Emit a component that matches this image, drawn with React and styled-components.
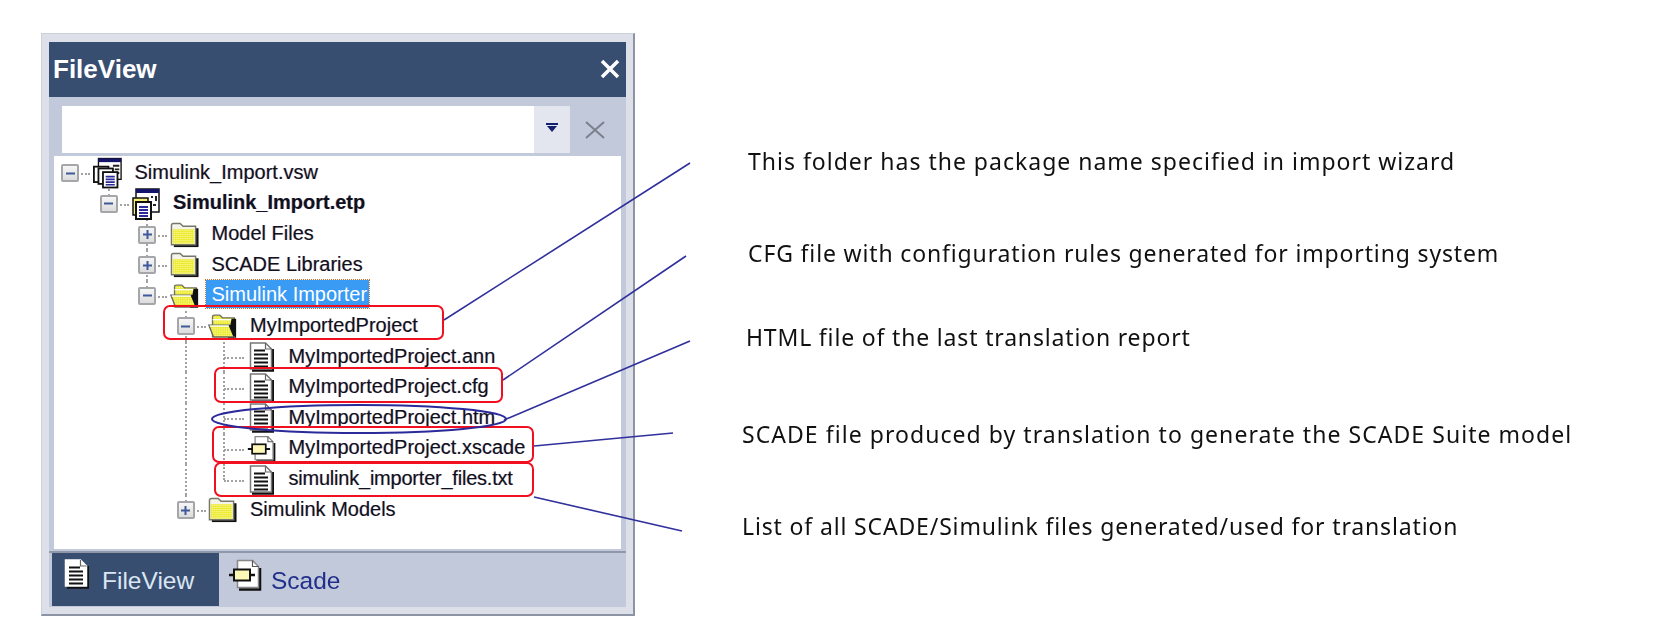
import styled, { createGlobalStyle } from "styled-components";

const GlobalStyle = createGlobalStyle`
  html, body { margin: 0; padding: 0; background: #fff; }
  body { font-family: "Liberation Sans", Arial, sans-serif; }
`;

const Page = styled.div`
  position: relative;
  display: flex;
  align-items: flex-start;
  width: 1666px;
  height: 634px;
  padding: 33px 0 0 41px;
  box-sizing: border-box;
  overflow: hidden;
  filter: blur(0.45px);
`;

/* ---- docked window ---- */
const Frame = styled.div`
  width: 594px;
  height: 583px;
  box-sizing: border-box;
  flex-shrink: 0;
  padding: 8px 7px 7px 7px;
  background: #dde0e9;
  border: 1px solid #cdd1da;
  border-right: 2px solid #8c94a6;
  border-bottom: 2px solid #8c94a6;
  display: flex;
  flex-direction: column;
`;

const TitleBar = styled.div`
  height: 55px;
  flex-shrink: 0;
  background: #384e70;
  display: flex;
  align-items: center;
  justify-content: space-between;
  padding: 0 6px 1px 4px;
  box-sizing: border-box;
`;

const Title = styled.span`
  color: #fff;
  font-size: 26px;
  font-weight: 700;
`;

const Body = styled.div`
  flex: 1;
  background: #c2c9da;
  display: flex;
  flex-direction: column;
`;

const Toolbar = styled.div`
  height: 59px;
  flex-shrink: 0;
  box-sizing: border-box;
  padding: 9px 0 3px 13px;
  display: flex;
  align-items: stretch;
`;

const SearchBox = styled.div`
  width: 508px;
  background: #fff;
  display: flex;
  justify-content: flex-end;
`;

const DropButton = styled.div`
  width: 36px;
  background: #e3e6ef;
  display: flex;
  align-items: center;
  justify-content: center;
  padding-bottom: 4px;
  box-sizing: border-box;
`;

const ClearButton = styled.div`
  width: 50px;
  display: flex;
  align-items: center;
  justify-content: center;
`;

const Tree = styled.div`
  height: 393px;
  flex-shrink: 0;
  margin: 0 5px;
  padding-top: 2px;
  box-sizing: border-box;
  background: #fff;
  display: flex;
  flex-direction: column;
`;

const Divider = styled.div`
  height: 2px;
  margin: 2px 0 0;
  background: #8f97a8;
  flex-shrink: 0;
`;

/* ---- tree rows ---- */
const Row = styled.div`
  height: 30.64px;
  display: flex;
  align-items: center;
  flex-shrink: 0;
`;

const Cell = styled.div`
  position: relative;
  width: 38.5px;
  height: 100%;
  flex-shrink: 0;
  display: flex;
  align-items: center;

  &::before {
    content: ${(p) => (p.$up || p.$down ? '""' : "none")};
    position: absolute;
    left: 15px;
    top: ${(p) => (p.$up ? "0" : "50%")};
    bottom: ${(p) => (p.$down ? "0" : "50%")};
    border-left: 2px dotted #a2a2a2;
  }

  &::after {
    content: ${(p) => (p.$across ? '""' : "none")};
    position: absolute;
    left: 16px;
    width: 20px;
    top: 50%;
    border-top: 2px dotted #a2a2a2;
  }
`;

const Expander = styled.div`
  position: relative;
  z-index: 1;
  width: 18px;
  height: 18px;
  margin-left: 7px;
  box-sizing: border-box;
  border: 2px solid #a4a6aa;
  border-radius: 2px;
  background: linear-gradient(#f6f6f6, #dcdcdc);
  display: flex;
  align-items: center;
  justify-content: center;
  color: #3f5a9a;
`;

const IconSlot = styled.div`
  position: relative;
  z-index: 1;
  width: 29px;
  flex-shrink: 0;
  display: flex;
  justify-content: center;
`;

const Label = styled.span`
  margin-left: ${(p) => (p.$selected ? "7px" : "13px")};
  margin-bottom: 3px;
  padding: ${(p) => (p.$selected ? "0 2px 0 6px" : "0")};
  line-height: 28px;
  font-size: 20px;
  letter-spacing: ${(p) => p.$track || 0}px;
  font-weight: ${(p) => (p.$bold ? 700 : 400)};
  white-space: nowrap;
  color: ${(p) => (p.$selected ? "#fff" : "#101020")};
  background: ${(p) => (p.$selected ? "#3a9bf4" : "transparent")};
  outline: ${(p) => (p.$selected ? "1px dotted #c8702a" : "none")};
  text-shadow: ${(p) =>
    p.$selected ? "none" : "0.7px 0 rgba(230,140,40,.3), -0.7px 0 rgba(40,90,230,.3)"};
`;

/* ---- bottom tabs ---- */
const TabStrip = styled.div`
  height: 53px;
  flex-shrink: 0;
  padding-left: 3px;
  display: flex;
`;

const Tab = styled.div`
  width: ${(p) => (p.$active ? "167px" : "auto")};
  box-sizing: border-box;
  padding: 6px 0 0 ${(p) => (p.$active ? "12px" : "9px")};
  background: ${(p) => (p.$active ? "#384e70" : "transparent")};
  color: ${(p) => (p.$active ? "#dbe6f4" : "#22308c")};
  font-size: 24.5px;
  display: flex;
  align-items: flex-start;
  gap: ${(p) => (p.$active ? "13px" : "9px")};
`;

const TabText = styled.span`
  line-height: 28px;
  margin-top: 8px;
`;

/* ---- notes on the right ---- */
const Notes = styled.div`
  display: flex;
  flex-direction: column;
  padding-top: 112px;
`;

const Note = styled.p`
  margin: ${(p) => p.$gap}px 0 0 ${(p) => p.$indent}px;
  height: 32px;
  line-height: 32px;
  font-family: "Noto Sans", sans-serif;
  font-size: 23px;
  letter-spacing: ${(p) => p.$track}px;
  white-space: nowrap;
  color: #111;
`;

const Overlay = styled.svg`
  position: absolute;
  top: 0;
  left: 0;
  pointer-events: none;
  z-index: 2;
`;

/* ---- icons ---- */
const FolderFill = () => (
  <defs>
    <pattern id="dither" width="2" height="2" patternUnits="userSpaceOnUse">
      <rect width="2" height="2" fill="#ecea30" />
      <rect width="1" height="1" fill="#fbfbb0" />
    </pattern>
  </defs>
);

const ClosedFolder = () => (
  <svg width="30" height="26" viewBox="0 0 30 26">
    <path d="M4 25.500h25.500V6H4z" fill="#111" />
    <path d="M1.500 23V3q0-2 2-2h7l3 3h13v19z" fill="#f4f4ea" stroke="#77776a" strokeWidth="1.500" />
    <rect x="3" y="7" width="22" height="15" fill="url(#dither)" />
  </svg>
);

const OpenFolder = () => (
  <svg width="32" height="28" viewBox="0 0 32 28">
    <path d="M5 4q0-2 2-2h6l3 3h13v21H5z" fill="url(#dither)" stroke="#70705f" strokeWidth="1.500" />
    <path d="M5 7h21" stroke="#fff" strokeWidth="1.500" />
    <path d="M26 6h5v21h-9z" fill="#111" />
    <path d="M1 13h23l5 13H6z" fill="url(#dither)" stroke="#66665a" strokeWidth="1.500" />
    <path d="M2 14h21" stroke="#fff" strokeWidth="1.500" />
    <path d="M24 13l5 12" stroke="#111" strokeWidth="2.500" />
  </svg>
);

const Doc = ({ light }) => (
  <svg width="25" height="30" viewBox="0 0 25 30">
    <path d="M3 28.500h21V7" fill="none" stroke="#111" strokeWidth="2.500" />
    <path d="M1.500 1h15l6 6v20h-21z" fill="#fff" stroke={light ? "#fff" : "#777"} strokeWidth="1.500" />
    <path d="M16.500 1v6h6" fill="none" stroke="#666" strokeWidth="1.200" />
    <path d="M5 8.500h11M5 12.500h14M5 16.500h14M5 20.500h14M5 24.500h14" stroke="#111" strokeWidth="2" />
  </svg>
);

const ScadeDoc = () => (
  <svg width="34" height="32" viewBox="0 0 34 32">
    <path d="M11 30.500h21V9" fill="none" stroke="#111" strokeWidth="2.500" />
    <path d="M9.500 1.500h15l6 6v21h-21z" fill="#fff" stroke="#888" strokeWidth="1.500" />
    <path d="M24.500 1.500v6h6" fill="none" stroke="#555" strokeWidth="1.200" />
    <path d="M1 16h5M22 16h5" stroke="#111" strokeWidth="2.500" />
    <rect x="6" y="10.500" width="16" height="11" fill="#fdf8b8" stroke="#111" strokeWidth="2" />
  </svg>
);

const Workspace = () => (
  <svg width="32" height="34" viewBox="0 0 32 34">
    <rect x="6" y="1" width="25" height="23" fill="#fff" stroke="#111" strokeWidth="1.500" />
    <rect x="6" y="1" width="25" height="4" fill="#14146a" />
    <path d="M22 9h7M24 13h5M24 17h5" stroke="#222" strokeWidth="2" />
    <rect x="1" y="10" width="16" height="17" fill="#fff" stroke="#111" strokeWidth="2" />
    <rect x="6" y="12" width="16" height="17" fill="#fff" stroke="#111" strokeWidth="2" />
    <rect x="11" y="16" width="16" height="17" fill="#fff" stroke="#111" strokeWidth="2" />
    <path d="M14 21h10M14 24h10M14 27h10M14 30h10" stroke="#2a2a9a" strokeWidth="1.800" />
  </svg>
);

const ProjectIcon = () => (
  <svg width="28" height="32" viewBox="0 0 28 32">
    <rect x="4" y="1" width="23" height="23" fill="#fff" stroke="#111" strokeWidth="1.500" />
    <rect x="4" y="1" width="23" height="4" fill="#14146a" />
    <path d="M19 9h2M24 8v5M17 16v5M21 17h3" stroke="#222" strokeWidth="2" />
    <rect x="1" y="10" width="15" height="17" fill="#f5ee70" stroke="#111" strokeWidth="1.500" />
    <rect x="4" y="14" width="15" height="17" fill="#fff" stroke="#111" strokeWidth="2" />
    <path d="M7 19h9M7 22h9M7 25h9M7 28h9" stroke="#2a2a9a" strokeWidth="1.800" />
  </svg>
);

const Sign = ({ plus }) => (
  <svg width="11" height="11" viewBox="0 0 11 11">
    <path d={plus ? "M1 5.500h9M5.500 1v9" : "M1 5.500h9"} stroke="currentColor" strokeWidth="2" />
  </svg>
);

const iconFor = {
  workspace: <Workspace />,
  project: <ProjectIcon />,
  closed: <ClosedFolder />,
  open: <OpenFolder />,
  doc: <Doc />,
  scade: <ScadeDoc />,
};

// guides: one entry per ancestor column, true when a dotted line runs through it
const rows = [
  { label: "Simulink_Import.vsw", icon: "workspace", guides: [], sign: "minus" },
  { label: "Simulink_Import.etp", icon: "project", guides: [false], sign: "minus", bold: true, up: true },
  { label: "Model Files", icon: "closed", guides: [false, false], sign: "plus", up: true, down: true },
  { label: "SCADE Libraries", icon: "closed", guides: [false, false], sign: "plus", up: true, down: true },
  { label: "Simulink Importer", icon: "open", guides: [false, false], sign: "minus", up: true, selected: true },
  { label: "MyImportedProject", icon: "open", guides: [false, false, false], sign: "minus", up: true, down: true },
  { label: "MyImportedProject.ann", icon: "doc", guides: [false, false, false, true], up: true, down: true },
  { label: "MyImportedProject.cfg", icon: "doc", guides: [false, false, false, true], up: true, down: true },
  { label: "MyImportedProject.htm", icon: "doc", guides: [false, false, false, true], up: true, down: true },
  { label: "MyImportedProject.xscade", icon: "scade", guides: [false, false, false, true], up: true, down: true },
  { label: "simulink_importer_files.txt", icon: "doc", guides: [false, false, false, true], up: true, track: -0.22 },
  { label: "Simulink Models", icon: "closed", guides: [false, false, false], sign: "plus", up: true },
];

const notes = [
  { text: "This folder has the package name specified in import wizard", gap: 0, indent: 113, track: 1.0 },
  { text: "CFG file with configuration rules generated for importing system", gap: 60, indent: 113, track: 0.85 },
  { text: "HTML file of the last translation report", gap: 52, indent: 111, track: 0.83 },
  { text: "SCADE file produced by translation to generate the SCADE Suite model", gap: 65, indent: 107, track: 1.05 },
  { text: "List of all SCADE/Simulink files generated/used for translation", gap: 60, indent: 107, track: 0.85 },
];

const highlights = [
  [164, 306, 279, 33],
  [215, 368, 287, 34],
  [213, 427, 320, 35],
  [215, 463, 318, 33],
];

const leaders = [
  [444, 320, 690, 163],
  [503, 380, 686, 256],
  [504, 420, 690, 341],
  [534, 446, 673, 433],
  [534, 497, 682, 531],
];

function TreeRow({ row }) {
  return (
    <Row>
      {row.guides.map((line, i) => (
        <Cell key={i} $up={line} $down={line} />
      ))}
      <Cell $up={row.up} $down={row.down} $across>
        {row.sign && (
          <Expander>
            <Sign plus={row.sign === "plus"} />
          </Expander>
        )}
      </Cell>
      <IconSlot>{iconFor[row.icon]}</IconSlot>
      <Label $bold={row.bold} $selected={row.selected} $track={row.track}>
        {row.label}
      </Label>
    </Row>
  );
}

export default function App() {
  return (
    <Page>
      <GlobalStyle />
      <svg width="0" height="0" style={{ position: "absolute" }}>
        <FolderFill />
      </svg>
      <Frame>
        <TitleBar>
          <Title>FileView</Title>
          <svg width="20" height="20" viewBox="0 0 20 20">
            <path d="M2 2l16 16M18 2L2 18" stroke="#fff" strokeWidth="3.500" />
          </svg>
        </TitleBar>
        <Body>
          <Toolbar>
            <SearchBox>
              <DropButton>
                <svg width="12" height="10" viewBox="0 0 12 10">
                  <path d="M0 0h12v2H0zM1 3h10L6 9z" fill="#10206a" />
                </svg>
              </DropButton>
            </SearchBox>
            <ClearButton>
              <svg width="20" height="18" viewBox="0 0 20 18">
                <path d="M1 1l18 16M19 1L1 17" stroke="#7a808c" strokeWidth="2" />
              </svg>
            </ClearButton>
          </Toolbar>
          <Tree>
            {rows.map((row) => (
              <TreeRow key={row.label} row={row} />
            ))}
          </Tree>
          <Divider />
          <TabStrip>
            <Tab $active>
              <Doc light />
              <TabText>FileView</TabText>
            </Tab>
            <Tab>
              <ScadeDoc />
              <TabText>Scade</TabText>
            </Tab>
          </TabStrip>
        </Body>
      </Frame>
      <Notes>
        {notes.map((n) => (
          <Note key={n.text} $gap={n.gap} $indent={n.indent} $track={n.track}>
            {n.text}
          </Note>
        ))}
      </Notes>
      <Overlay width="1666" height="634" viewBox="0 0 1666 634">
        {highlights.map(([x, y, w, h]) => (
          <rect key={y} x={x} y={y} width={w} height={h} rx="6" fill="none" stroke="#f01020" strokeWidth="2" />
        ))}
        <ellipse cx="359" cy="419" rx="147" ry="14" fill="none" stroke="#2a2a9a" strokeWidth="2" />
        {leaders.map(([x1, y1, x2, y2]) => (
          <line key={y1} x1={x1} y1={y1} x2={x2} y2={y2} stroke="#30309c" strokeWidth="1.600" />
        ))}
      </Overlay>
    </Page>
  );
}
